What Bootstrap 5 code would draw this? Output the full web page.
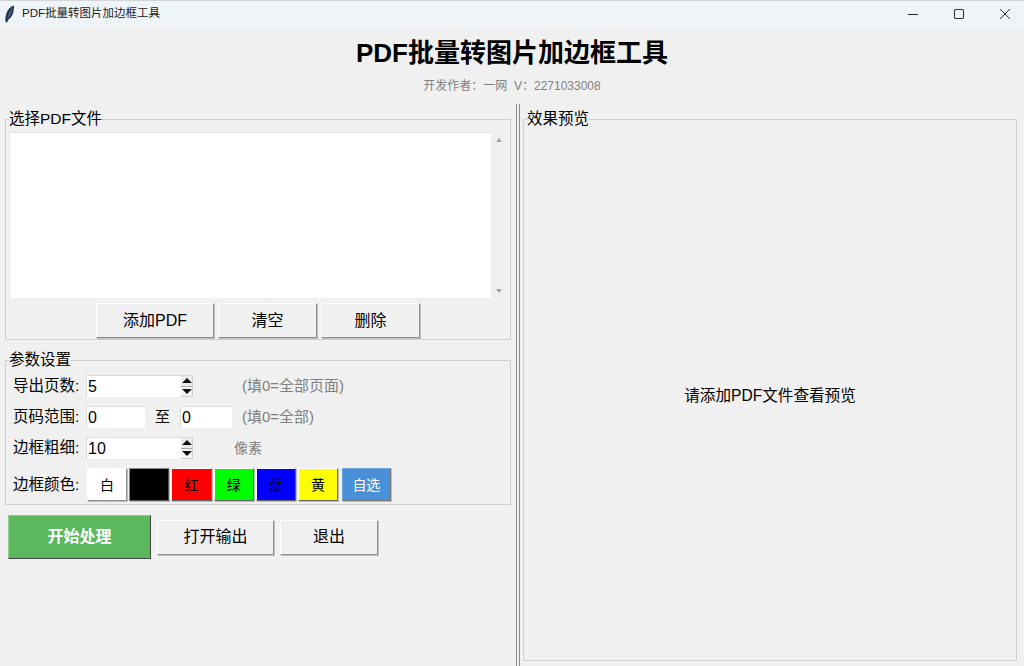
<!DOCTYPE html>
<html lang="zh-CN">
<head>
<meta charset="utf-8">
<title>PDF批量转图片加边框工具</title>
<link rel="stylesheet" href="https://cdn.jsdelivr.net/npm/bootstrap@5.3.0/dist/css/bootstrap.min.css">
<style>
html,body{height:100%;overflow:hidden}
body{background:#f0f0f0;color:#000;font-family:"Liberation Sans","Noto Sans CJK SC",sans-serif;font-size:15px}
.app-win{width:1024px;height:666px}
.title-strip{height:27px;background:#eff4f9;border-top:1px solid #d4d6d9;font-size:11.500px;color:#222}
.feather{width:11px;height:18px;margin:0 7px 0 4px}
.win-ctl{width:46px;height:26px}
.win-close{width:38px;margin-left:4px;padding-left:13px}
.app-title{font-size:26px;font-weight:700;line-height:36px;margin:8px 0 0;letter-spacing:0}
.app-sub{font-size:12px;line-height:16px;color:#808080;margin:7px 0 0}
.panes{height:562px;margin-top:10px}
.left-pane{width:516px;padding:5px 5px 0 5px}
.sash{width:4px;height:562px;background:#f0f0f0;border-left:1px solid #8e8e8e;border-right:1px solid #8e8e8e}
.right-pane{padding:5px 7px 0 3px;flex:1 1 auto}
fieldset.grp{border:1px solid #cfcfcf;padding:0 3px;display:block}
legend.grp-t{float:none;width:auto;font-size:15.500px;line-height:20px;margin:0;padding:0;height:20px}
.files{height:166px;margin-top:3px}
.file-box{width:482px;background:#fff;border-top:1px solid #e3e3e3;border-left:1px solid #e8e8e8}
.scroll-rail{width:16px;background:#f0f0f0;padding:6px 0 5px}
.tri-up,.tri-dn{width:0;height:0;border-left:3.500px solid transparent;border-right:3.500px solid transparent}
.tri-up{border-bottom:4px solid #a3a3a3}
.tri-dn{border-top:4px solid #a3a3a3}
.btn.tk{--bs-btn-padding-x:0;--bs-btn-padding-y:0;background:#f0f0f0;color:#000;font-size:16px;line-height:1;border:1px solid;border-color:#fff #8f8f8f #8f8f8f #fff;box-shadow:1px 1px 0 #bdbdbd;border-radius:0}
.w-add{width:118px;height:35px}
.w-clr{width:99px;height:35px}
.w-del{width:99px;height:35px}
.btn-gap{gap:4px;margin-top:5px;margin-bottom:1px;padding-left:87px}
fieldset.param-set{margin-top:10px;padding-bottom:3px}
.prow{height:22px;margin-left:4px}
.first-row{margin-top:5px}
.prow+.prow{margin-top:9px}
.plab{width:73px;font-size:15.500px;line-height:22px;white-space:nowrap}
.tk-in{background:#fff;height:22px;font-size:16px;line-height:22px;padding:0 1px;border-top:1px solid #dcdcdc;border-left:1px solid #dcdcdc;overflow:hidden}
.spin{width:107px;padding-right:0}
.spin-arrows{width:12px;height:21px;background:#ececec;border:1px solid #cfcfcf;border-width:0 1px 1px 0}
.spin-cell{height:10px;flex:1 1 0;width:100%}
.spin-cell+.spin-cell{border-top:1px solid #a8a8a8;background:#f4f4f4}
.spin-up,.spin-dn{width:0;height:0;border-left:5px solid transparent;border-right:5px solid transparent}
.spin-up{border-bottom:5px solid #111}
.spin-dn{border-top:5px solid #111}
.rng{width:59px}
.rng2{width:52px}
.zhi{width:35px;text-align:center;font-size:15px}
.hint{color:#808080;font-size:15px;line-height:22px}
.hint-a{margin-left:49px}
.hint-b{margin-left:10px}
.hint-c{margin-left:41px;font-size:14px}
.cswatch{gap:2px;margin-left:1px}
.color-row{height:33px;margin-top:9px;margin-left:4px}
.btn.sw{--bs-btn-padding-x:0;--bs-btn-padding-y:0;width:40.200px;height:33px;font-size:14px;line-height:1;border:1px solid;border-color:#fff #666 #666 #fff;box-shadow:1px 1px 0 #bdbdbd;border-radius:0;color:#000}
.sw-w{background:#fff;border-color:#fff #8f8f8f #8f8f8f #fff!important}
.sw-k{background:#000;border-color:#8a8a8a #555 #555 #8a8a8a!important}
.sw-r{background:#f00}
.sw-g{background:#0f0}
.sw-b{background:#00f}
.sw-y{background:#ff0}
.btn.sw-c{background:#4a90d9;color:#fff;width:49.500px;margin-left:1.500px;border-color:#6aa3de #777 #777 #6aa3de}
.act-row{gap:6px;margin-top:10px;padding-left:3px}
.btn.go{--bs-btn-padding-x:0;--bs-btn-padding-y:0;width:143px;height:44px;background:#5cb85c;color:#fff;font-weight:700;font-size:16px;border:1px solid;border-color:#8ed08e #444 #444 #8ed08e;border-radius:0}
.w-open{width:117px;height:35px}
.w-exit{width:98px;height:35px}
.prev-set{height:552px}
.prev-msg{font-size:15.600px;height:530px;padding-top:4px}
</style>
</head>
<body>
<div class="app-win d-flex flex-column">
  <div class="title-strip d-flex align-items-center">
    <svg class="feather" viewBox="0 0 11 18"><path d="M10 .5C10 6 9 11.500 5 14L2.800 17.500 1.800 17.200C1 15 1.300 13 2 10 3 5.500 6 1.500 10 .5z" fill="#26334d"/><path d="M8.500 3C6.500 5.500 4.500 9.500 3.300 13.500 5.500 11 7.500 8 8.500 3z" fill="#4f78b0"/></svg>
    <span class="flex-grow-1">PDF批量转图片加边框工具</span>
    <span class="win-ctl d-flex align-items-center justify-content-center"><svg width="12" height="12" viewBox="0 0 12 12"><path d="M1 6.500h10" stroke="#333" stroke-width="1.100"/></svg></span>
    <span class="win-ctl d-flex align-items-center justify-content-center"><svg width="12" height="12" viewBox="0 0 12 12"><rect x="1.500" y="1.500" width="9" height="9" rx="1.200" fill="none" stroke="#333" stroke-width="1.100"/></svg></span>
    <span class="win-ctl win-close d-flex align-items-center"><svg width="12" height="12" viewBox="0 0 12 12"><path d="M1 1l10 10M11 1L1 11" stroke="#333" stroke-width="1"/></svg></span>
  </div>
  <h1 class="app-title text-center">PDF批量转图片加边框工具</h1>
  <p class="app-sub text-center">开发作者：一网&nbsp;&nbsp;V：2271033008</p>
  <div class="panes d-flex">
    <div class="left-pane">
      <fieldset class="grp">
        <legend class="grp-t">选择PDF文件</legend>
        <div class="files d-flex">
          <div class="file-box"></div>
          <div class="scroll-rail d-flex flex-column align-items-center justify-content-between"><span class="tri-up"></span><span class="tri-dn"></span></div>
        </div>
        <div class="d-flex btn-gap">
          <button class="btn tk w-add">添加PDF</button>
          <button class="btn tk w-clr">清空</button>
          <button class="btn tk w-del">删除</button>
        </div>
      </fieldset>
      <fieldset class="grp param-set">
        <legend class="grp-t">参数设置</legend>
        <div class="prow first-row d-flex align-items-center">
          <span class="plab">导出页数:</span>
          <div class="tk-in spin d-flex justify-content-between"><span>5</span><span class="spin-arrows d-flex flex-column"><span class="spin-cell d-flex align-items-center justify-content-center"><span class="spin-up"></span></span><span class="spin-cell d-flex align-items-center justify-content-center"><span class="spin-dn"></span></span></span></div>
          <span class="hint hint-a">(填0=全部页面)</span>
        </div>
        <div class="prow d-flex align-items-center">
          <span class="plab">页码范围:</span>
          <div class="tk-in rng">0</div>
          <span class="zhi">至</span>
          <div class="tk-in rng2">0</div>
          <span class="hint hint-b">(填0=全部)</span>
        </div>
        <div class="prow d-flex align-items-center">
          <span class="plab">边框粗细:</span>
          <div class="tk-in spin d-flex justify-content-between"><span>10</span><span class="spin-arrows d-flex flex-column"><span class="spin-cell d-flex align-items-center justify-content-center"><span class="spin-up"></span></span><span class="spin-cell d-flex align-items-center justify-content-center"><span class="spin-dn"></span></span></span></div>
          <span class="hint hint-c">像素</span>
        </div>
        <div class="color-row d-flex align-items-center">
          <span class="plab">边框颜色:</span>
          <div class="d-flex cswatch">
            <button class="btn sw sw-w">白</button>
            <button class="btn sw sw-k">黑</button>
            <button class="btn sw sw-r">红</button>
            <button class="btn sw sw-g">绿</button>
            <button class="btn sw sw-b">蓝</button>
            <button class="btn sw sw-y">黄</button>
            <button class="btn sw sw-c">自选</button>
          </div>
        </div>
      </fieldset>
      <div class="d-flex align-items-center act-row">
        <button class="btn go">开始处理</button>
        <button class="btn tk w-open">打开输出</button>
        <button class="btn tk w-exit">退出</button>
      </div>
    </div>
    <div class="sash"></div>
    <div class="right-pane">
      <fieldset class="grp prev-set">
        <legend class="grp-t">效果预览</legend>
        <div class="prev-msg d-flex align-items-center justify-content-center">请添加PDF文件查看预览</div>
      </fieldset>
    </div>
  </div>
</div>
<script src="https://cdn.jsdelivr.net/npm/bootstrap@5.3.0/dist/js/bootstrap.bundle.min.js"></script>
</body>
</html>
